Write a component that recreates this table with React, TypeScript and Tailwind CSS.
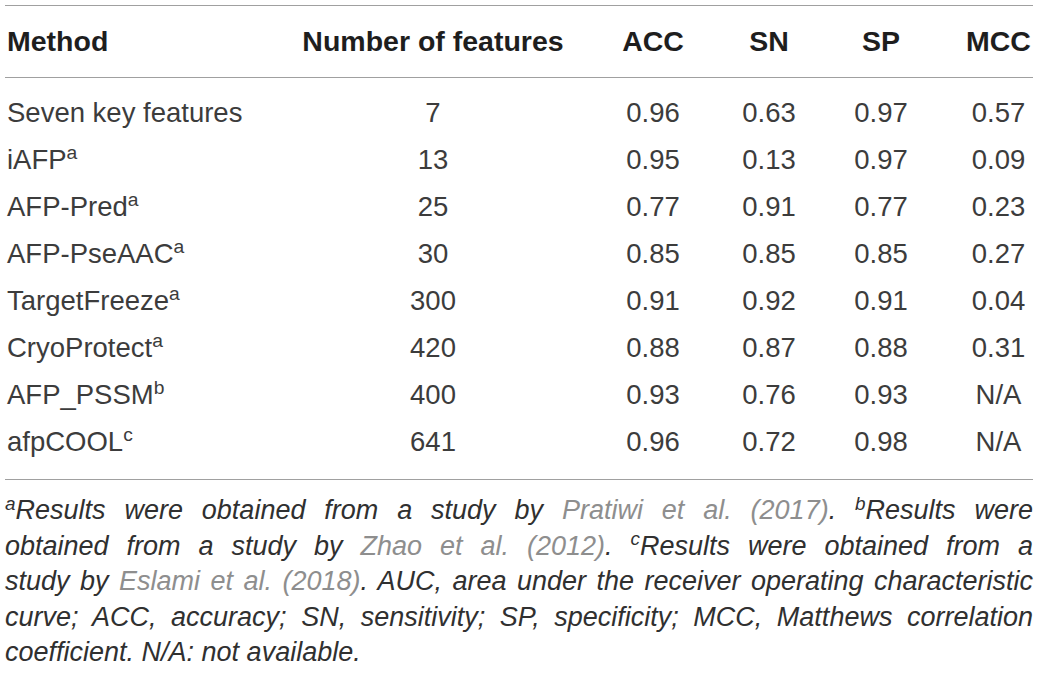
import React from 'react';

const rows: [string, string, string, string, string, string, string][] = [
  ['Seven key features', '', '7', '0.96', '0.63', '0.97', '0.57'],
  ['iAFP', 'a', '13', '0.95', '0.13', '0.97', '0.09'],
  ['AFP-Pred', 'a', '25', '0.77', '0.91', '0.77', '0.23'],
  ['AFP-PseAAC', 'a', '30', '0.85', '0.85', '0.85', '0.27'],
  ['TargetFreeze', 'a', '300', '0.91', '0.92', '0.91', '0.04'],
  ['CryoProtect', 'a', '420', '0.88', '0.87', '0.88', '0.31'],
  ['AFP_PSSM', 'b', '400', '0.93', '0.76', '0.93', 'N/A'],
  ['afpCOOL', 'c', '641', '0.96', '0.72', '0.98', 'N/A'],
];

const cols = 'grid grid-cols-[295px_266px_174px_58px_166px_69px]';

function Sup({ children }: { children: React.ReactNode }) {
  return <span className="relative -top-[0.5em] text-[0.7em] leading-none">{children}</span>;
}

function Ref({ children }: { children: React.ReactNode }) {
  return <span className="text-[#8e8e8e]">{children}</span>;
}

export default function App() {
  return (
    <div className="w-[1040px] h-[678px] bg-white px-[5px] pt-[5px] font-['Liberation_Sans',Arial,sans-serif] text-[#3c3c3c] overflow-hidden">
      <div className="w-[1028px]">
        {/* header */}
        <div className={`${cols} h-[73px] items-center border-y border-[#a0a0a0] text-[28.5px] font-bold text-[#1e1e1e]`}>
          <div className="pl-[2px]">Method</div>
          <div className="text-center whitespace-nowrap">Number of features</div>
          <div className="text-center">ACC</div>
          <div className="text-center">SN</div>
          <div className="text-center">SP</div>
          <div className="text-center">MCC</div>
        </div>

        {/* body */}
        <div className="pt-[11px] pb-[14px] border-b border-[#a0a0a0] text-[27.5px]">
          {rows.map((r) => (
            <div key={r[0]} className={`${cols} h-[47px] items-center`}>
              <div className="pl-[2px] whitespace-nowrap">
                {r[0]}
                {r[1] && <Sup>{r[1]}</Sup>}
              </div>
              {r.slice(2).map((v, i) => (
                <div key={i} className="text-center whitespace-nowrap">{v}</div>
              ))}
            </div>
          ))}
        </div>

        {/* footnote */}
        <div className="pt-[13px] text-[27px] leading-[35.5px] italic text-[#303030]">
          <div className="text-justify [text-align-last:justify] whitespace-nowrap">
            <Sup>a</Sup>Results were obtained from a study by <Ref>Pratiwi et al. (2017)</Ref>. <Sup>b</Sup>Results were
          </div>
          <div className="text-justify [text-align-last:justify] whitespace-nowrap">
            obtained from a study by <Ref>Zhao et al. (2012)</Ref>. <Sup>c</Sup>Results were obtained from a
          </div>
          <div className="text-justify [text-align-last:justify] whitespace-nowrap">
            study by <Ref>Eslami et al. (2018)</Ref>. AUC, area under the receiver operating characteristic
          </div>
          <div className="text-justify [text-align-last:justify] whitespace-nowrap">
            curve; ACC, accuracy; SN, sensitivity; SP, specificity; MCC, Matthews correlation
          </div>
          <div className="whitespace-nowrap">coefficient. N/A: not available.</div>
        </div>
      </div>
    </div>
  );
}
